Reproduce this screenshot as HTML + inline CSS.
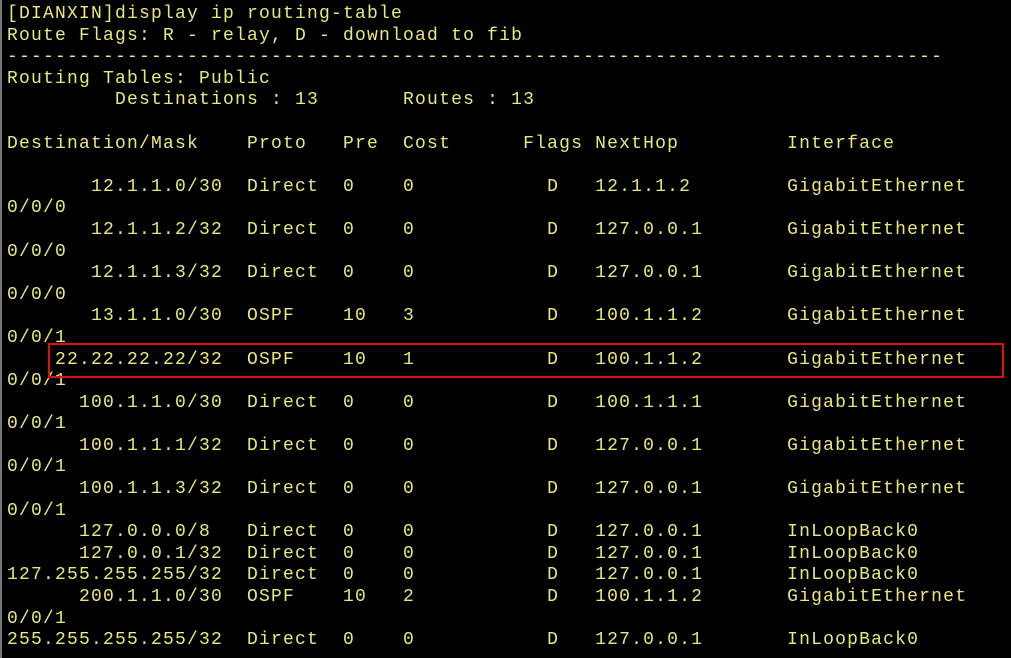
<!DOCTYPE html>
<html><head><meta charset="utf-8"><style>
html,body{margin:0;padding:0;background:#000;width:1011px;height:658px;overflow:hidden}
body{border-left:2px solid #777;box-sizing:border-box;position:relative}
pre{margin:0;position:absolute;left:5px;top:4px;font-family:"Liberation Mono",monospace;font-size:18px;letter-spacing:1.2px;line-height:21.6px;color:#e8e87c}
.box{position:absolute;left:46px;top:343px;width:952px;height:31px;border:2px solid #e01010}
</style></head><body>
<pre>[DIANXIN]display ip routing-table
Route Flags: R - relay, D - download to fib
------------------------------------------------------------------------------
Routing Tables: Public
         Destinations : 13       Routes : 13

Destination/Mask    Proto   Pre  Cost      Flags NextHop         Interface

       12.1.1.0/30  Direct  0    0           D   12.1.1.2        GigabitEthernet
0/0/0
       12.1.1.2/32  Direct  0    0           D   127.0.0.1       GigabitEthernet
0/0/0
       12.1.1.3/32  Direct  0    0           D   127.0.0.1       GigabitEthernet
0/0/0
       13.1.1.0/30  OSPF    10   3           D   100.1.1.2       GigabitEthernet
0/0/1
    22.22.22.22/32  OSPF    10   1           D   100.1.1.2       GigabitEthernet
0/0/1
      100.1.1.0/30  Direct  0    0           D   100.1.1.1       GigabitEthernet
0/0/1
      100.1.1.1/32  Direct  0    0           D   127.0.0.1       GigabitEthernet
0/0/1
      100.1.1.3/32  Direct  0    0           D   127.0.0.1       GigabitEthernet
0/0/1
      127.0.0.0/8   Direct  0    0           D   127.0.0.1       InLoopBack0
      127.0.0.1/32  Direct  0    0           D   127.0.0.1       InLoopBack0
127.255.255.255/32  Direct  0    0           D   127.0.0.1       InLoopBack0
      200.1.1.0/30  OSPF    10   2           D   100.1.1.2       GigabitEthernet
0/0/1
255.255.255.255/32  Direct  0    0           D   127.0.0.1       InLoopBack0</pre>
<div class="box"></div>
</body></html>
